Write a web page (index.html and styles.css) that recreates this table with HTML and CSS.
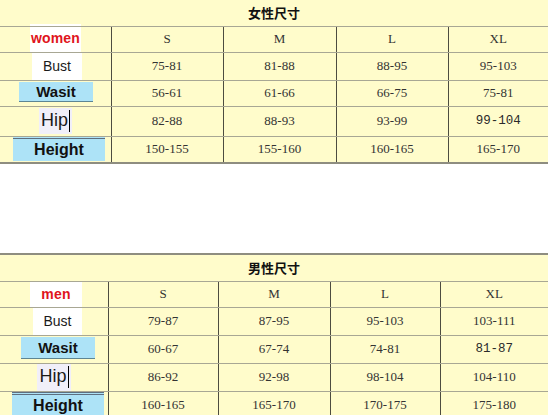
FILE: index.html
```html
<!DOCTYPE html>
<html>
<head>
<meta charset="utf-8">
<link rel="stylesheet" href="styles.css">
</head>
<body>
<table class="size t1">
  <colgroup>
    <col class="c1"><col class="c2"><col class="c3"><col class="c4"><col class="c5">
  </colgroup>
  <tr class="rt"><th colspan="5">女性尺寸</th></tr>
  <tr class="ra"><td class="lab"><div class="tag tag-sex">women</div></td><td>S</td><td>M</td><td>L</td><td>XL</td></tr>
  <tr class="rb"><td class="lab"><div class="tag tag-bust">Bust</div></td><td>75-81</td><td>81-88</td><td>88-95</td><td>95-103</td></tr>
  <tr class="rc"><td class="lab"><div class="tag tag-wasit">Wasit</div></td><td>56-61</td><td>61-66</td><td>66-75</td><td>75-81</td></tr>
  <tr class="rd"><td class="lab"><div class="tag tag-hip">Hip<span class="caret"></span></div></td><td>82-88</td><td>88-93</td><td>93-99</td><td class="mono">99-104</td></tr>
  <tr class="re"><td class="lab"><div class="tag tag-height">Height</div></td><td>150-155</td><td>155-160</td><td>160-165</td><td>165-170</td></tr>
</table>

<table class="size t2">
  <colgroup>
    <col class="c1"><col class="c2"><col class="c3"><col class="c4"><col class="c5">
  </colgroup>
  <tr class="rt"><th colspan="5">男性尺寸</th></tr>
  <tr class="ra"><td class="lab"><div class="tag tag-sex">men</div></td><td>S</td><td>M</td><td>L</td><td>XL</td></tr>
  <tr class="rb"><td class="lab"><div class="tag tag-bust">Bust</div></td><td>79-87</td><td>87-95</td><td>95-103</td><td>103-111</td></tr>
  <tr class="rc"><td class="lab"><div class="tag tag-wasit">Wasit</div></td><td>60-67</td><td>67-74</td><td>74-81</td><td class="mono">81-87</td></tr>
  <tr class="rd"><td class="lab"><div class="tag tag-hip">Hip<span class="caret"></span></div></td><td>86-92</td><td>92-98</td><td>98-104</td><td>104-110</td></tr>
  <tr class="re"><td class="lab"><div class="tag tag-height">Height</div></td><td>160-165</td><td>165-170</td><td>170-175</td><td>175-180</td></tr>
</table>
</body>
</html>
```
FILE: styles.css
```css
body {
  margin: 0;
  background: #ffffff;
}

.size {
  width: 548px;
  border-collapse: collapse;
  table-layout: fixed;
  background: #fffccb;
  font-family: "Liberation Serif", serif;
  font-size: 13px;
  color: #333333;
}

.size td,
.size th {
  padding: 0;
  text-align: center;
  vertical-align: middle;
  border-top: 1px solid #a8a794;
  border-bottom: 1px solid #a8a794;
  border-left: 1px solid #4d4c40;
  overflow: visible;
}

.size td.lab {
  border-left: none;
  vertical-align: top;
}

.size th {
  border-left: none;
  font-family: "Noto Sans CJK SC", sans-serif;
  font-weight: bold;
  font-size: 13px;
  color: #111111;
}

.t1 th {
  border-top: none;
}

.t2 th {
  border-top: 2px solid #8e8d80;
}

.size tr.re td {
  border-bottom: 2px solid #8e8d80;
}

.mono {
  font-family: "Liberation Mono", monospace;
  font-size: 12.5px;
  color: #2a2a2a;
}

/* column widths */
.t1 .c1 { width: 111px; }
.t1 .c2 { width: 112px; }
.t1 .c3 { width: 113px; }
.t1 .c4 { width: 112px; }
.t1 .c5 { width: 100px; }

.t2 .c1 { width: 108px; }
.t2 .c2 { width: 110px; }
.t2 .c3 { width: 112px; }
.t2 .c4 { width: 110px; }
.t2 .c5 { width: 108px; }

/* row heights */
.t1 .rt { height: 26px; }
.t1 .ra { height: 26px; }
.t1 .rb { height: 28px; }
.t1 .rc { height: 26px; }
.t1 .rd { height: 30px; }
.t1 .re { height: 27px; }

.t2 { margin-top: 89px; }
.t2 .rt { height: 27px; }
.t2 .ra { height: 26px; }
.t2 .rb { height: 27px; }
.t2 .rc { height: 28px; }
.t2 .rd { height: 27px; }
.t2 .re { height: 27px; }

/* label tags */
.tag {
  box-sizing: border-box;
  display: flex;
  align-items: center;
  justify-content: center;
  font-family: "Liberation Sans", Arial, sans-serif;
  color: #111111;
  text-align: center;
}

.tag-sex {
  background: #ffffff;
  color: #e0141c;
  font-weight: bold;
  font-size: 14px;
  letter-spacing: 0.2px;
}

.tag-bust {
  background: #ffffff;
  font-size: 14px;
  color: #1a1a1a;
}

.tag-wasit {
  background: #ade3f7;
  border-bottom: 1px solid #5d8593;
  font-weight: bold;
  font-size: 15px;
}

.tag-hip {
  background: #f1eff9;
  font-size: 18px;
  color: #1a1a1a;
}

.caret {
  display: inline-block;
  width: 1px;
  height: 22px;
  background: #000000;
  margin-left: 1px;
}

.tag-height {
  background: #ade3f7;
  border-top: 3px double #5e6f80;
  font-weight: bold;
  font-size: 16px;
}

/* top table label placement */
.t1 .tag-sex    { width: 51px; height: 28px; margin: -3px 0 -1px 30px; }
.t1 .tag-bust   { width: 50px; height: 28px; margin: -1px 0 -1px 32px; }
.t1 .tag-wasit  { width: 74px; height: 20px; margin: 1px 0 0 19px; }
.t1 .tag-hip    { width: 33px; height: 26px; margin: 1px 0 0 39px; }
.t1 .tag-height { width: 92px; height: 25px; margin: -1px 0 0 13px; }

/* bottom table label placement */
.t2 .tag-sex    { width: 52px; height: 26px; margin: -1px 0 0 30px; }
.t2 .tag-bust   { width: 49px; height: 27px; margin: 0 0 0 33px; }
.t2 .tag-wasit  { width: 74px; height: 22px; margin: 1px 0 0 21px; }
.t2 .tag-hip    { width: 34px; height: 28px; margin: -1px 0 0 37px; }
.t2 .tag-height { width: 92px; height: 26px; margin: 0 0 0 12px; }
```
